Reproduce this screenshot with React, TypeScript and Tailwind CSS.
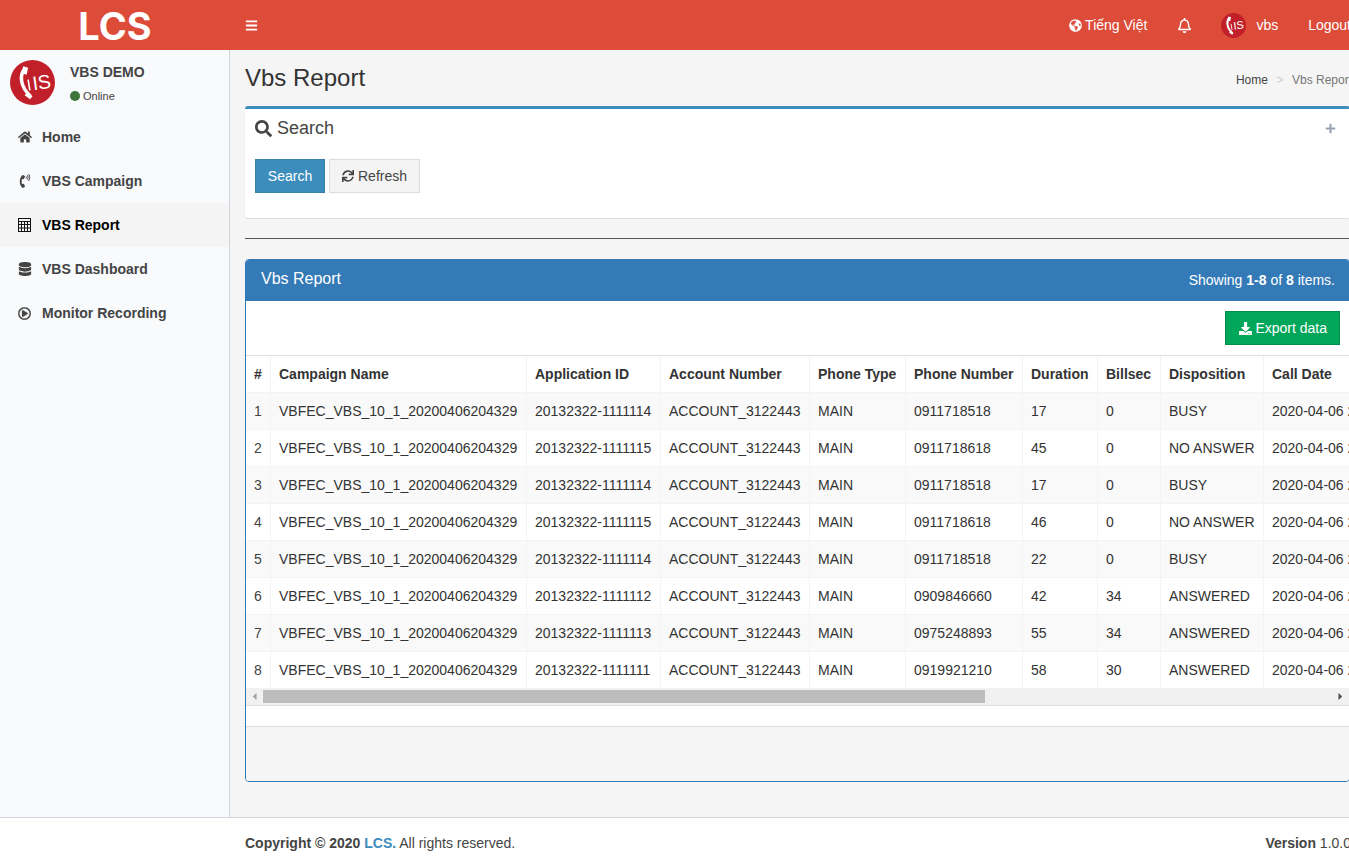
import React from "react";
import { FaHome, FaPhoneVolume, FaDatabase, FaRegPlayCircle, FaGlobeAmericas, FaRegBell, FaSearch, FaSync, FaDownload, FaPlus, FaBars, FaCaretLeft, FaCaretRight } from "react-icons/fa";

const Avatar = ({ size }: { size: number }) => (
  <svg width={size} height={size} viewBox="0 0 46 46" className="shrink-0">
    <circle cx="23" cy="23" r="23" fill="#c1202a" />
    <path d="M15 9C9 16 11 28 21 37" fill="none" stroke="#fff" strokeWidth="3.6" />
    <path d="M13.5 6.5l5 1.5-1.5 7-5-1.5zM18 33l5 4-2.5 3-5.5-4z" fill="#fff" />
    <path d="M18.5 20l1.8 11" stroke="#fff" strokeWidth="1.6" />
    <text x="23" y="30" fontFamily="'Liberation Sans',sans-serif" fontSize="20" fill="#fff" transform="rotate(-8 30 24)">IS</text>
  </svg>
);

const CalcIcon = () => (
  <svg width="13" height="14" viewBox="0 0 13 14" className="shrink-0" fill="none" stroke="#111" strokeWidth="1">
    <rect x="0.5" y="0.5" width="12" height="13" />
    <path d="M0.5 3.5h12M0.5 6.5h12M0.5 10h12M3.5 3.5v10M6.5 3.5v10M9.5 3.5v10" />
  </svg>
);

const nav = [
  { label: "Home", icon: <FaHome size={14} /> },
  { label: "VBS Campaign", icon: <FaPhoneVolume size={14} /> },
  { label: "VBS Report", icon: <CalcIcon />, active: true },
  { label: "VBS Dashboard", icon: <FaDatabase size={14} /> },
  { label: "Monitor Recording", icon: <FaRegPlayCircle size={13} strokeWidth={12} /> },
];

const cols = [
  { h: "#", w: "w-[24px]" },
  { h: "Campaign Name", w: "w-[256px]" },
  { h: "Application ID", w: "w-[134px]" },
  { h: "Account Number", w: "w-[149px]" },
  { h: "Phone Type", w: "w-[96px]" },
  { h: "Phone Number", w: "w-[117px]" },
  { h: "Duration", w: "w-[75px]" },
  { h: "Billsec", w: "w-[63px]" },
  { h: "Disposition", w: "w-[103px]" },
  { h: "Call Date", w: "w-[160px]" },
];

const C = "VBFEC_VBS_10_1_20200406204329";
const A = "ACCOUNT_3122443";
const rows = [
  ["1", C, "20132322-1111114", A, "MAIN", "0911718518", "17", "0", "BUSY"],
  ["2", C, "20132322-1111115", A, "MAIN", "0911718618", "45", "0", "NO ANSWER"],
  ["3", C, "20132322-1111114", A, "MAIN", "0911718518", "17", "0", "BUSY"],
  ["4", C, "20132322-1111115", A, "MAIN", "0911718618", "46", "0", "NO ANSWER"],
  ["5", C, "20132322-1111114", A, "MAIN", "0911718518", "22", "0", "BUSY"],
  ["6", C, "20132322-1111112", A, "MAIN", "0909846660", "42", "34", "ANSWERED"],
  ["7", C, "20132322-1111113", A, "MAIN", "0975248893", "55", "34", "ANSWERED"],
  ["8", C, "20132322-1111111", A, "MAIN", "0919921210", "58", "30", "ANSWERED"],
];

export default function App() {
  return (
    <div className="h-[868px] w-[1349px] overflow-hidden bg-white text-[14px] leading-[20px] text-[#333] font-['Liberation_Sans',Arial,sans-serif]">
      <div className="w-[1365px]">
        <header className="flex h-[50px] items-center bg-[#dd4b39] text-white">
          <div className="flex h-[50px] w-[230px] items-center justify-center pt-[2px] font-['Inter',sans-serif] text-[38px] font-bold leading-none">LCS</div>
          <button className="ml-[15px] flex h-[50px] items-center"><FaBars size={13} /></button>
          <nav className="ml-auto flex items-center">
            <span className="flex items-center gap-[3px]"><FaGlobeAmericas size={13} />Tiếng Việt</span>
            <FaRegBell size={15} className="ml-[30px]" />
            <span className="ml-[29px] flex items-center gap-[10px]"><Avatar size={25} />vbs</span>
            <span className="ml-[30px] mr-[14px]">Logout</span>
          </nav>
        </header>

        <div className="flex h-[767px]">
          <aside className="w-[230px] shrink-0 border-r border-[#d2d6de] bg-[#f9fafc]">
            <div className="flex h-[65px] px-[10px] pt-[10px]">
              <Avatar size={45} />
              <div className="ml-[15px]">
                <p className="mt-[2px] text-[14px] font-bold leading-[20px] text-[#444]">VBS DEMO</p>
                <p className="mt-[6px] flex items-center gap-[3px] text-[11px] leading-[16px] text-[#444]"><span className="h-[10px] w-[10px] rounded-full bg-[#3c763d]" />Online</p>
              </div>
            </div>
            <ul>
              {nav.map((n) => (
                <li key={n.label} className={`flex h-[44px] items-center font-bold ${n.active ? "bg-[#f4f4f5] text-black" : "text-[#444]"}`}>
                  <span className="flex w-[42px] shrink-0 justify-start pl-[18px]">{n.icon}</span>
                  {n.label}
                </li>
              ))}
            </ul>
          </aside>

          <main className="min-w-0 flex-1 bg-[#f5f5f5] px-[15px]">
            <div className="flex h-[56px] items-start justify-between">
              <h1 className="mt-[14px] text-[24px] leading-[28px] text-[#333]">Vbs Report</h1>
              <div className="mr-[-2px] mt-[22px] flex text-[12px] leading-[17px]">
                <span className="text-[#444]">Home</span>
                <span className="px-[8.5px] text-[#ccc]">&gt;</span>
                <span className="text-[#777]">Vbs Report</span>
              </div>
            </div>

            <section className="h-[112px] rounded-[3px] border-t-[3px] border-[#3c8dbc] bg-white shadow-[0_1px_1px_rgba(0,0,0,0.1)]">
              <div className="flex h-[38px] items-center justify-between pl-[10px] pr-[14px]">
                <h3 className="flex items-center gap-[5px] text-[18px] leading-[20px] text-[#444]"><FaSearch size={17} />Search</h3>
                <FaPlus size={11} className="text-[#97a0b3]" />
              </div>
              <div className="mt-[12px] flex gap-[4px] pl-[10px]">
                <button className="h-[34px] w-[70px] border border-[#367fa9] bg-[#3c8dbc] text-white">Search</button>
                <button className="flex h-[34px] w-[91px] items-center justify-center gap-[4px] border border-[#ddd] bg-[#f4f4f4] text-[#444]"><FaSync size={12} />Refresh</button>
              </div>
            </section>

            <hr className="mt-[20px] border-0 border-t border-[#555]" />

            <section className="mt-[20px] h-[523px] overflow-hidden rounded-[4px] border border-[#337ab7] bg-white">
              <div className="flex h-[41px] bg-[#337ab7] px-[15px] text-white">
                <h3 className="mt-[10px] text-[16px] leading-[18px]">Vbs Report</h3>
                <div className="ml-auto mr-[-1px] mt-[10px]">Showing <b>1-8</b> of <b>8</b> items.</div>
              </div>
              <div className="flex h-[54px] items-start justify-end pr-[9px] pt-[10px]">
                <button className="flex h-[34px] items-center gap-[3px] border border-[#008d4c] bg-[#00a65a] pl-[13px] pr-[12px] text-white"><FaDownload size={13} />Export data</button>
              </div>
              <div className="overflow-hidden border-t border-[#ddd]">
                <table className="w-[1177px] table-fixed border-collapse">
                  <thead>
                    <tr className="h-[36px]">
                      {cols.map((c, i) => (
                        <th key={c.h} className={`${c.w} border-r border-[#f4f4f4] ${i === 0 ? "pl-[8px]" : "pl-[8.5px]"} text-left font-bold whitespace-nowrap`}>{c.h}</th>
                      ))}
                    </tr>
                  </thead>
                  <tbody>
                    {rows.map((r, i) => (
                      <tr key={r[0]} className={`h-[37px] border-t border-[#f4f4f4] ${i % 2 === 0 ? "bg-[#f9f9f9]" : "bg-white"}`}>
                        {r.map((v, j) => (
                          <td key={j} className={`border-r border-[#f4f4f4] whitespace-nowrap ${j === 0 ? "pl-[8px] text-[#444]" : "pl-[8.5px]"}`}>{v}</td>
                        ))}
                        <td className="pl-[8.5px] whitespace-nowrap">2020-04-06 20:43:29</td>
                      </tr>
                    ))}
                  </tbody>
                </table>
              </div>
              <div className="flex h-[17px] w-[1103px] items-center bg-[#f1f1f1]">
                <span className="flex w-[17px] shrink-0 justify-center text-[#a3a3a3]"><FaCaretLeft size={11} /></span>
                <span className="h-[13px] w-[722px] bg-[#bdbdbd]" />
                <span className="ml-auto flex w-[17px] shrink-0 justify-center text-[#505050]"><FaCaretRight size={11} /></span>
              </div>
              <div className="h-[21px] border-t border-[#ddd]" />
              <div className="h-[55px] border-t border-[#ddd] bg-[#f5f5f5]" />
            </section>
          </main>
        </div>

        <footer className="flex h-[51px] items-center justify-between border-t border-[#d2d6de] bg-white pl-[245px] pr-[14px] text-[#444]">
          <div><b>Copyright © 2020 <span className="text-[#3c8dbc]">LCS.</span></b> All rights reserved.</div>
          <div><b>Version</b> 1.0.0</div>
        </footer>
      </div>
    </div>
  );
}
